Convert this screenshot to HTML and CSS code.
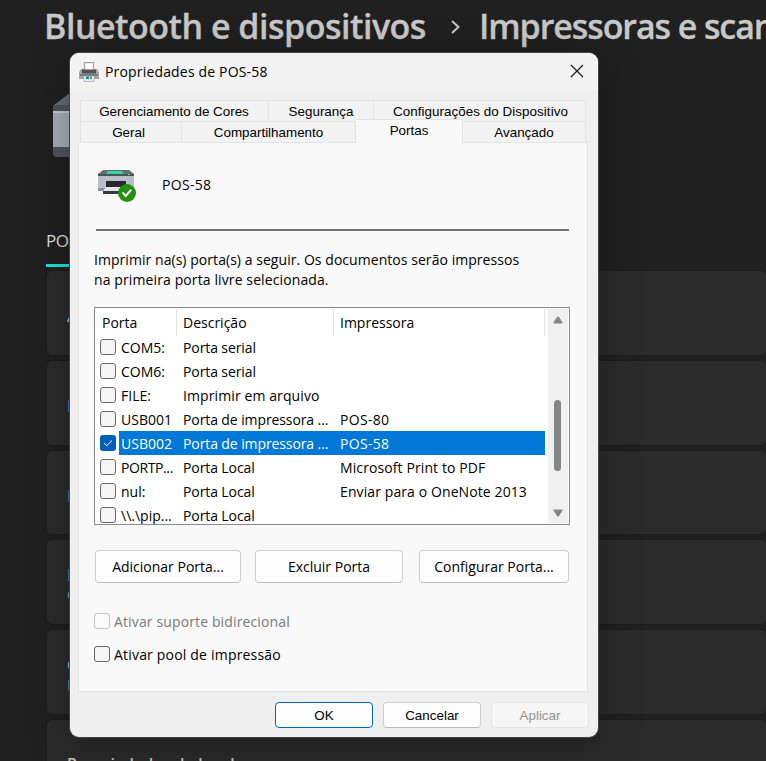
FILE: index.html
```html
<!DOCTYPE html>
<html lang="pt-BR">
<head>
<meta charset="utf-8">
<title>Propriedades de POS-58</title>
<link rel="stylesheet" href="styles.css">
</head>
<body>
<main class="settings">
  <h1 class="crumbs"><span class="crumb-a">Bluetooth e dispositivos</span><svg class="chev" width="11" height="16" viewBox="0 0 11 16"><path d="M2 2l6.500 6L2 14" fill="none" stroke="#c8c8c8" stroke-width="2"/></svg><span class="crumb-b">Impressoras e scan</span></h1>
  <svg class="device" width="60" height="64" viewBox="0 0 60 64"><path d="M0 13L17 0H60V64H4Q0 64 0 60z" fill="#51555b"/><path d="M1 12L17 0H60V12z" fill="#686c72"/><path d="M0 18H60V54H0z" fill="#a7adb7"/><path d="M0 18H60V20H0z" fill="#c5cad1"/></svg>
  <div class="device-name">PO</div>
  <div class="cards">
    <div class="card">A</div>
    <div class="card">I</div>
    <div class="card">I</div>
    <div class="card">P<small>C</small></div>
    <div class="card">C<small>P</small></div>
    <div class="card last">Propriedades do hardware</div>
  </div>
</main>
<section class="dialog">
  <header class="titlebar">
    <svg width="20" height="20" viewBox="0 0 20 20"><path d="M5.500 8V.700h9V8" fill="#fff" stroke="#a5a5a5" stroke-width="1.200"/><path d="M2 7h3v1h10V7h3l2 3v7H0v-7z" fill="#a3a5a7"/><path d="M3 7.500h14v4H3z" fill="#505255"/><path d="M1 12h18v2H1z" fill="#777a7d"/><path d="M4.500 14h11l-.5 5.500H5z" fill="#e4eef4" stroke="#8d949a" stroke-width=".6"/><path d="M7 14.500h3v2.500H7z" fill="#1581b9"/><path d="M11 14.500h2v2.500h-2z" fill="#4c9e77"/></svg>
    <span class="title">Propriedades de POS-58</span>
    <svg class="close" width="14" height="14" viewBox="0 0 14 14"><path d="M1 1l12 12M13 1L1 13" stroke="#191919" stroke-width="1.200"/></svg>
  </header>
  <div class="tabs">
    <div class="tabrow upper"><span class="t1">Gerenciamento de Cores</span><span class="t2">Segurança</span><span class="t3">Configurações do Dispositivo</span></div>
    <div class="tabrow lower"><span class="t4">Geral</span><span class="t5">Compartilhamento</span><span class="t6 active">Portas</span><span class="t7">Avançado</span></div>
  </div>
  <div class="panel">
    <div class="printer">
      <svg width="40" height="34" viewBox="0 0 40 34"><path d="M1 5L6 1h26l5 4v3H1z" fill="#676c73"/><path d="M11 2h14l2 3H9z" fill="#36d3ac"/><path d="M1 5h36v3H1z" fill="#4c5157"/><path d="M1 7h36v14H1z" fill="#b7c0ca"/><path d="M1 19h36v3H1z" fill="#87909b"/><path d="M9 12h20v7H9z" fill="#24272b"/><path d="M6 22h22v3H6z" fill="#353a40"/><path d="M9 18h20v4H6z" fill="#e4e7ea"/><path d="M31 5h2v1h-2z" fill="#44e98e"/><circle cx="30" cy="24" r="9" fill="#23910f"/><path d="M25.500 23.500l3.300 3.500 5.500-6.300" fill="none" stroke="#fff" stroke-width="2"/></svg>
      <span class="pname">POS-58</span>
    </div>
    <div class="rule"></div>
    <p class="intro"><span class="i1">Imprimir na(s) porta(s) a seguir. Os documentos serão impressos</span><br><span class="i2">na primeira porta livre selecionada.</span></p>
    <div class="list">
      <div class="table">
        <div class="row head"><span>Porta</span><span>Descrição</span><span>Impressora</span></div>
        <div class="row"><i class="box"></i><span class="port">COM5:</span><span class="desc">Porta serial</span><span></span></div>
        <div class="row"><i class="box"></i><span class="port">COM6:</span><span class="desc">Porta serial</span><span></span></div>
        <div class="row"><i class="box"></i><span class="port">FILE:</span><span>Imprimir em arquivo</span><span></span></div>
        <div class="row"><i class="box"></i><span class="port">USB001</span><span class="desc">Porta de impressora ...</span><span class="pos">POS-80</span></div>
        <div class="row sel"><i class="box on"><svg width="16" height="16" viewBox="0 0 16 16"><path d="M4 8l2.700 2.700L12 5.500" fill="none" stroke="#fff"/></svg></i><span class="port">USB002</span><span class="desc">Porta de impressora ...</span><span class="pos">POS-58</span></div>
        <div class="row"><i class="box"></i><span class="port cut">PORTP...</span><span class="desc">Porta Local</span><span>Microsoft Print to PDF</span></div>
        <div class="row"><i class="box"></i><span class="port">nul:</span><span class="desc">Porta Local</span><span>Enviar para o OneNote 2013</span></div>
        <div class="row"><i class="box"></i><span class="port">\\.\pip...</span><span class="desc">Porta Local</span><span></span></div>
      </div>
      <div class="scroll">
        <svg width="10" height="8" viewBox="0 0 10 8"><path d="M4 1Q5 0 6 1L9.500 6.500Q9.500 7.500 9 7.500H1Q.5 7.500 .5 6.500z" fill="#858585"/></svg>
        <div class="thumb"></div>
        <svg width="10" height="8" viewBox="0 0 10 8"><path d="M4 7Q5 8 6 7L9.500 1.500Q9.500.5 9 .5H1Q.5.5 .5 1.500z" fill="#858585"/></svg>
      </div>
    </div>
    <div class="actions"><button class="b1">Adicionar Porta...</button><button class="b2">Excluir Porta</button><button class="b3">Configurar Porta...</button></div>
    <div class="check off"><i class="box"></i><span>Ativar suporte bidirecional</span></div>
    <div class="check"><i class="box"></i><span>Ativar pool de impressão</span></div>
  </div>
  <footer class="footer"><button class="ok">OK</button><button>Cancelar</button><button class="disabled">Aplicar</button></footer>
</section>
</body>
</html>
```
FILE: styles.css
```css
* { box-sizing: border-box; }
body { margin: 0; width: 766px; height: 761px; overflow: hidden; background: #202020; font: 14px/20px "Open Sans", sans-serif; color: #000; }
span { white-space: nowrap; }
button { padding: 0; font: inherit; color: inherit; }

.settings { height: 761px; overflow: hidden; color: #c8c8c8; }
.crumbs { display: flex; align-items: center; margin: 0; padding-left: 44px; height: 54px; font-size: 34px; line-height: 54px; font-weight: 600; white-space: nowrap; -webkit-text-stroke: 0.3px #c8c8c8; }
.crumb-a { width: 381px; letter-spacing: -0.5px; margin-top: -2px; }
.chev { margin: 0 18px 0 25px; flex: none; }
.crumb-b { letter-spacing: -1.1px; margin-top: -2px; }
.device { display: block; margin: 39px 0 0 53px; }
.device-name { margin: 72px 0 0 46px; width: 60px; height: 38px; border-bottom: 3px solid #18e5d8; font-size: 17px; line-height: 24px; color: #dedede; letter-spacing: -0.5px; }
.cards { margin: 4px 0 0 47px; display: grid; grid-template-rows: 84px 84px 83px 84px 84px 84px; gap: 6px; }
.card { display: flex; flex-direction: column; justify-content: center; padding: 6px 0 0 20px; border-radius: 5px; background: #2b2b2b; box-shadow: 0 0 0 1px #1d1d1d; font-size: 17px; white-space: nowrap; }
.card small { font-size: 14px; color: #999; }
.card.last { justify-content: flex-start; padding-top: 34px; font-size: 16px; font-weight: 600; }

.dialog { position: absolute; left: 70px; top: 53px; width: 528px; height: 684px; border-radius: 9px; background: #efefef; box-shadow: 0 0 0 1px #444, 0 8px 38px 5px rgba(0,0,0,.25); overflow: visible; }
.titlebar { display: flex; align-items: center; height: 37px; padding: 0 14px 0 9px; border-radius: 9px 9px 0 0; background: #f3f3f3; }
.title { margin-left: 6px; flex: 1; letter-spacing: 0.17px; }
.close { margin-top: -2px; }

.tabs { height: 53px; padding: 10px 0 0 10px; font: 13.400px/20px "Liberation Sans", sans-serif; text-align: center; }
.tabrow { display: flex; width: 506px; height: 21px; }
.tabrow span { border: 1px solid #e3e3e3; border-left-width: 0; background: #f2f2f2; height: 22px; line-height: 21px; }
.tabrow span:first-child { border-left-width: 1px; }
.upper span { border-bottom: 0; height: 21px; }
.tabrow .t1 { width: 189px; padding-right: 1px; }
.t2 { width: 105px; }
.t3 { width: 212px; padding-left: 2px; letter-spacing: 0.05px; }
.tabrow .t4 { width: 102px; padding-right: 5px; }
.t5 { width: 174px; }
.t6 { width: 107px; }
.t7 { width: 123px; }
.lower .active { position: relative; height: 25px; margin-top: -2px; background: #f9f9f9; border-bottom: 0; line-height: 22px; }

.panel { margin: -1px 0 0 8px; width: 510px; height: 550px; padding: 0 18px 0 15px; border: 1px solid #e3e3e3; background: #f9f9f9; }
.printer { display: flex; align-items: center; padding: 26px 0 0 3px; height: 60px; }
.pname { margin-left: 25px; margin-top: -3px; letter-spacing: 0.3px; }
.rule { width: 473px; height: 2px; margin: 26px 0 0 2px; background: #747474; }
.intro { margin: 19px 0 0; line-height: 20px; }
.i1 { letter-spacing: 0.05px; }
.i2 { letter-spacing: 0.11px; }

.list { display: flex; width: 476px; height: 218px; margin-top: 17px; border: 1px solid #868a93; background: #fff; overflow: hidden; }
.table { flex: 1; }
.row { display: grid; grid-template-columns: 24px 60px 157px 1fr; width: 450px; height: 24px; line-height: 26px; letter-spacing: 0.1px; }
.row span { padding-left: 4px; }
.row .port { padding-left: 2px; letter-spacing: 0; }
.row .port.cut { letter-spacing: -0.4px; }
.row .desc { letter-spacing: -0.1px; }
.row .pos { letter-spacing: 0.3px; }
.head { grid-template-columns: 82px 157px 211px; height: 27px; padding-top: 1px; line-height: 27px; letter-spacing: 0; }
.row.head span { padding-left: 6px; border-right: 1px solid #e4e4e4; }
.row.head span:first-child { padding-left: 7px; }
.sel { color: #fff; background: linear-gradient(90deg, #fff 24px, #0078d7 24px); }
.box { width: 16px; height: 16px; border: 1px solid #686868; border-radius: 3px; background: #f5f5f5; }
.row .box { margin: 4px 0 0 5px; }
.box.on { border: 0; background: #005fb8; }
.box svg { display: block; }
.scroll { display: flex; flex-direction: column; align-items: center; justify-content: space-between; width: 20px; height: 214px; margin: 1px 1px 0 0; padding: 7px 1px 6px 0; background: #f0f0f0; }
.thumb { width: 7px; height: 71px; margin-top: 38px; border-radius: 4px; background: #858585; }

.actions { display: flex; margin: 25px 0 0 1px; }
button { height: 33px; border: 1px solid #cfcfcf; border-bottom-color: #bbb; border-radius: 4px; background: #fdfdfd; }
.b1 { width: 146px; }
.b2 { width: 148px; margin: 0 16px 0 14px; }
.b3 { width: 150px; }
.check { display: flex; align-items: center; gap: 4px; height: 20px; margin-top: 13px; letter-spacing: 0.19px; }
.check span { padding-top: 2px; }
.check.off { margin-top: 28px; color: #797979; letter-spacing: 0.13px; }
.off .box { border-color: #c5c5c5; background: #fafafa; }

.footer { display: flex; justify-content: flex-end; gap: 10px; padding: 10px 9px 0 0; font: 13.400px/20px "Liberation Sans", sans-serif; }
.footer button { width: 98px; height: 26px; padding-top: 1px; }
.footer .ok { border-color: #0067c0; }
.footer .disabled { border-color: #e6e6e6; background: #f6f6f6; color: #929292; }
```
